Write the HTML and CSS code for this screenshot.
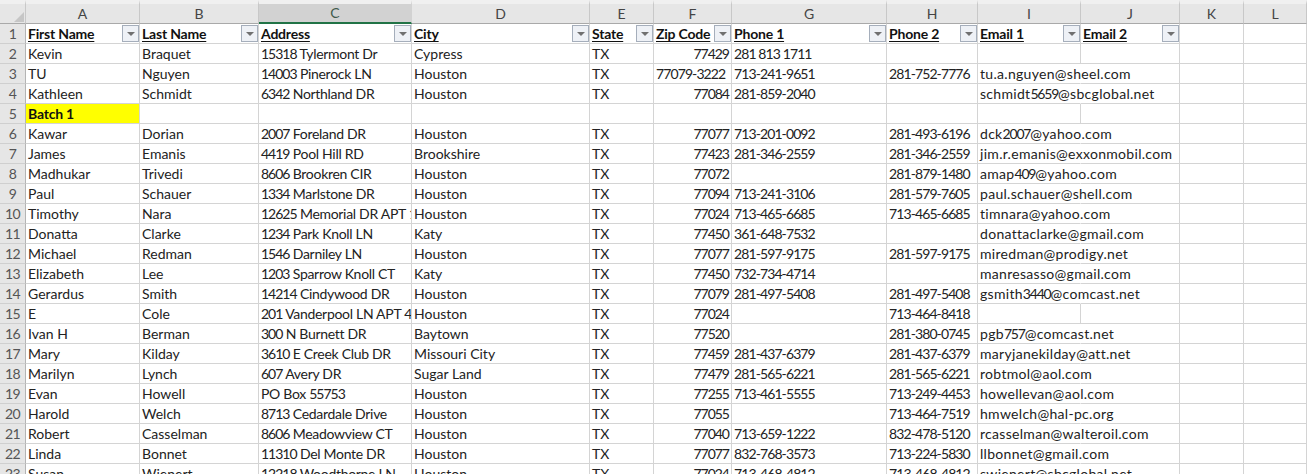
FILE: index.html
```html
<!DOCTYPE html>
<html lang="en">
<head>
<meta charset="utf-8">
<title>Contacts worksheet</title>
<link rel="stylesheet" href="styles.css">
</head>
<body>
<table class="sheet">
<colgroup>
<col class="c-rh"><col class="c-a"><col class="c-b"><col class="c-c"><col class="c-d"><col class="c-e"><col class="c-f"><col class="c-g"><col class="c-h"><col class="c-i"><col class="c-j"><col class="c-k"><col class="c-l">
</colgroup>
<thead>
<tr><th class="corner"><span class="tri"></span></th><th>A</th><th>B</th><th class="sel">C</th><th>D</th><th>E</th><th>F</th><th>G</th><th>H</th><th>I</th><th>J</th><th>K</th><th>L</th></tr>
</thead>
<tbody>
<tr class="hdr"><th>1</th>
<td><div class="fc"><span>First Name</span><i class="fb"></i></div></td>
<td><div class="fc"><span>Last Name</span><i class="fb"></i></div></td>
<td><div class="fc"><span>Address</span><i class="fb"></i></div></td>
<td><div class="fc"><span>City</span><i class="fb"></i></div></td>
<td><div class="fc"><span>State</span><i class="fb"></i></div></td>
<td><div class="fc"><span>Zip Code</span><i class="fb"></i></div></td>
<td><div class="fc"><span>Phone 1</span><i class="fb"></i></div></td>
<td><div class="fc"><span>Phone 2</span><i class="fb"></i></div></td>
<td><div class="fc"><span>Email 1</span><i class="fb"></i></div></td>
<td><div class="fc"><span>Email 2</span><i class="fb"></i></div></td>
<td></td><td></td></tr>
<tr><th>2</th><td>Kevin</td><td>Braquet</td><td><span class="d">15318</span> Tylermont Dr</td><td>Cypress</td><td>TX</td><td class="n p">77429</td><td class="p">281 813 1711</td><td></td><td></td><td></td><td></td><td></td></tr>
<tr><th>3</th><td>TU</td><td>Nguyen</td><td><span class="d">14003</span> Pinerock LN</td><td>Houston</td><td>TX</td><td class="p">77079-3222</td><td class="p">713-241-9651</td><td class="p">281-752-7776</td><td class="spill">tu.a.nguyen@sheel.com</td><td></td><td></td><td></td></tr>
<tr><th>4</th><td>Kathleen</td><td>Schmidt</td><td><span class="d">6342</span> Northland DR</td><td>Houston</td><td>TX</td><td class="n p">77084</td><td class="p">281-859-2040</td><td></td><td class="spill">schmidt<span class="d">5659</span>@sbcglobal.net</td><td></td><td></td><td></td></tr>
<tr><th>5</th><td class="batch">Batch 1</td><td></td><td></td><td></td><td></td><td></td><td></td><td></td><td></td><td></td><td></td><td></td></tr>
<tr><th>6</th><td>Kawar</td><td>Dorian</td><td><span class="d">2007</span> Foreland DR</td><td>Houston</td><td>TX</td><td class="n p">77077</td><td class="p">713-201-0092</td><td class="p">281-493-6196</td><td class="spill">dck<span class="d">2007</span>@yahoo.com</td><td></td><td></td><td></td></tr>
<tr><th>7</th><td>James</td><td>Emanis</td><td><span class="d">4419</span> Pool Hill RD</td><td>Brookshire</td><td>TX</td><td class="n p">77423</td><td class="p">281-346-2559</td><td class="p">281-346-2559</td><td class="spill">jim.r.emanis@exxonmobil.com</td><td></td><td></td><td></td></tr>
<tr><th>8</th><td>Madhukar</td><td>Trivedi</td><td><span class="d">8606</span> Brookren CIR</td><td>Houston</td><td>TX</td><td class="n p">77072</td><td></td><td class="p">281-879-1480</td><td class="spill">amap<span class="d">409</span>@yahoo.com</td><td></td><td></td><td></td></tr>
<tr><th>9</th><td>Paul</td><td>Schauer</td><td><span class="d">1334</span> Marlstone DR</td><td>Houston</td><td>TX</td><td class="n p">77094</td><td class="p">713-241-3106</td><td class="p">281-579-7605</td><td class="spill">paul.schauer@shell.com</td><td></td><td></td><td></td></tr>
<tr><th>10</th><td>Timothy</td><td>Nara</td><td><span class="d">12625</span> Memorial DR APT <span class="d">110</span></td><td>Houston</td><td>TX</td><td class="n p">77024</td><td class="p">713-465-6685</td><td class="p">713-465-6685</td><td class="spill">timnara@yahoo.com</td><td></td><td></td><td></td></tr>
<tr><th>11</th><td>Donatta</td><td>Clarke</td><td><span class="d">1234</span> Park Knoll LN</td><td>Katy</td><td>TX</td><td class="n p">77450</td><td class="p">361-648-7532</td><td></td><td class="spill">donattaclarke@gmail.com</td><td></td><td></td><td></td></tr>
<tr><th>12</th><td>Michael</td><td>Redman</td><td><span class="d">1546</span> Darniley LN</td><td>Houston</td><td>TX</td><td class="n p">77077</td><td class="p">281-597-9175</td><td class="p">281-597-9175</td><td class="spill">miredman@prodigy.net</td><td></td><td></td><td></td></tr>
<tr><th>13</th><td>Elizabeth</td><td>Lee</td><td><span class="d">1203</span> Sparrow Knoll CT</td><td>Katy</td><td>TX</td><td class="n p">77450</td><td class="p">732-734-4714</td><td></td><td class="spill">manresasso@gmail.com</td><td></td><td></td><td></td></tr>
<tr><th>14</th><td>Gerardus</td><td>Smith</td><td><span class="d">14214</span> Cindywood DR</td><td>Houston</td><td>TX</td><td class="n p">77079</td><td class="p">281-497-5408</td><td class="p">281-497-5408</td><td class="spill">gsmith<span class="d">3440</span>@comcast.net</td><td></td><td></td><td></td></tr>
<tr><th>15</th><td>E</td><td>Cole</td><td><span class="d">201</span> Vanderpool LN APT <span class="d">4110</span></td><td>Houston</td><td>TX</td><td class="n p">77024</td><td></td><td class="p">713-464-8418</td><td></td><td></td><td></td><td></td></tr>
<tr><th>16</th><td>Ivan H</td><td>Berman</td><td><span class="d">300</span> N Burnett DR</td><td>Baytown</td><td>TX</td><td class="n p">77520</td><td></td><td class="p">281-380-0745</td><td class="spill">pgb<span class="d">757</span>@comcast.net</td><td></td><td></td><td></td></tr>
<tr><th>17</th><td>Mary</td><td>Kilday</td><td><span class="d">3610</span> E Creek Club DR</td><td>Missouri City</td><td>TX</td><td class="n p">77459</td><td class="p">281-437-6379</td><td class="p">281-437-6379</td><td class="spill">maryjanekilday@att.net</td><td></td><td></td><td></td></tr>
<tr><th>18</th><td>Marilyn</td><td>Lynch</td><td><span class="d">607</span> Avery DR</td><td>Sugar Land</td><td>TX</td><td class="n p">77479</td><td class="p">281-565-6221</td><td class="p">281-565-6221</td><td class="spill">robtmol@aol.com</td><td></td><td></td><td></td></tr>
<tr><th>19</th><td>Evan</td><td>Howell</td><td>PO Box <span class="d">55753</span></td><td>Houston</td><td>TX</td><td class="n p">77255</td><td class="p">713-461-5555</td><td class="p">713-249-4453</td><td class="spill">howellevan@aol.com</td><td></td><td></td><td></td></tr>
<tr><th>20</th><td>Harold</td><td>Welch</td><td><span class="d">8713</span> Cedardale Drive</td><td>Houston</td><td>TX</td><td class="n p">77055</td><td></td><td class="p">713-464-7519</td><td class="spill">hmwelch@hal-pc.org</td><td></td><td></td><td></td></tr>
<tr><th>21</th><td>Robert</td><td>Casselman</td><td><span class="d">8606</span> Meadowview CT</td><td>Houston</td><td>TX</td><td class="n p">77040</td><td class="p">713-659-1222</td><td class="p">832-478-5120</td><td class="spill">rcasselman@walteroil.com</td><td></td><td></td><td></td></tr>
<tr><th>22</th><td>Linda</td><td>Bonnet</td><td><span class="d">11310</span> Del Monte DR</td><td>Houston</td><td>TX</td><td class="n p">77077</td><td class="p">832-768-3573</td><td class="p">713-224-5830</td><td class="spill">llbonnet@gmail.com</td><td></td><td></td><td></td></tr>
<tr><th>23</th><td>Susan</td><td>Wienert</td><td><span class="d">12218</span> Woodthorne LN</td><td>Houston</td><td>TX</td><td class="n p">77024</td><td class="p">713-468-4812</td><td class="p">713-468-4812</td><td class="spill">swienert@sbcglobal.net</td><td></td><td></td><td></td></tr>
</tbody>
</table>
</body>
</html>
```

FILE: styles.css
```css
html, body {
  margin: 0;
  height: 100%;
  overflow: hidden;
  background: #fff;
}

.sheet {
  table-layout: fixed;
  width: 1307px;
  border-collapse: separate;
  border-spacing: 0;
  font-family: "Lato", "Open Sans", sans-serif;
  font-size: 14px;
  color: #222;
}

.c-rh { width: 26px; }
.c-a { width: 114px; }
.c-b { width: 119px; }
.c-c { width: 153px; }
.c-d { width: 178px; }
.c-e { width: 64px; }
.c-f { width: 78px; }
.c-g { width: 155px; }
.c-h { width: 91px; }
.c-i { width: 103px; }
.c-j { width: 99px; }
.c-k { width: 64px; }
.c-l { width: 63px; }

thead th {
  box-sizing: border-box;
  height: 24px;
  padding: 0;
  background: #e6e6e6;
  border-top: 4px solid #f0f0f0;
  border-right: 1px solid #c8c8c8;
  border-bottom: 1px solid #a9a9a9;
  font-weight: 400;
  font-size: 14px;
  line-height: 18px;
  color: #444;
  text-align: center;
}

thead th.sel {
  background: #d2d2d2;
  border-bottom: 2px solid #217346;
  border-right-color: #d2d2d2;
  color: #3f5a4c;
}

.corner {
  position: relative;
}

.tri {
  position: absolute;
  right: 1px;
  bottom: 1px;
  width: 0;
  height: 0;
  border-style: solid;
  border-width: 0 0 10px 10px;
  border-color: transparent transparent #c6c6c6 transparent;
}

tbody th {
  box-sizing: border-box;
  height: 20px;
  padding: 0;
  background: #e6e6e6;
  border-right: 1px solid #b4b4b4;
  border-bottom: 1px solid #cfcfcf;
  font-weight: 400;
  font-size: 14px;
  letter-spacing: -0.5px;
  line-height: 19px;
  color: #555;
  text-align: center;
}

td {
  box-sizing: border-box;
  height: 20px;
  padding: 0 2px;
  border-right: 1px solid #d4d4d4;
  border-bottom: 1px solid #d4d4d4;
  line-height: 19px;
  white-space: nowrap;
  overflow: hidden;
}

td:nth-child(4) {
  letter-spacing: -0.3px;
}

td.n {
  text-align: right;
}

td.p {
  letter-spacing: -0.9px;
}

td.n.p {
  letter-spacing: -1px;
}

.d {
  letter-spacing: -1px;
}

td.spill {
  overflow: visible;
  border-right-color: transparent;
  letter-spacing: 0.3px;
}

td.spill .d {
  letter-spacing: -1.2px;
}

td.batch {
  background: #ffff00;
  font-weight: 700;
  letter-spacing: -0.2px;
  color: #111;
}

.hdr td {
  padding-right: 0;
  font-weight: 700;
  letter-spacing: -0.2px;
  color: #111;
}

.fc {
  display: flex;
  justify-content: space-between;
  align-items: center;
  height: 19px;
}

.fc span {
  text-decoration: underline;
  text-underline-offset: 2px;
}

.fb {
  box-sizing: border-box;
  display: flex;
  align-items: center;
  justify-content: center;
  flex: none;
  width: 17px;
  height: 17px;
  background: #eef1f6;
  border: 1px solid #a5aebb;
}

.fb::before {
  content: "";
  width: 0;
  height: 0;
  border-style: solid;
  border-width: 4px 4px 0 4px;
  border-color: #707070 transparent transparent transparent;
}
```
